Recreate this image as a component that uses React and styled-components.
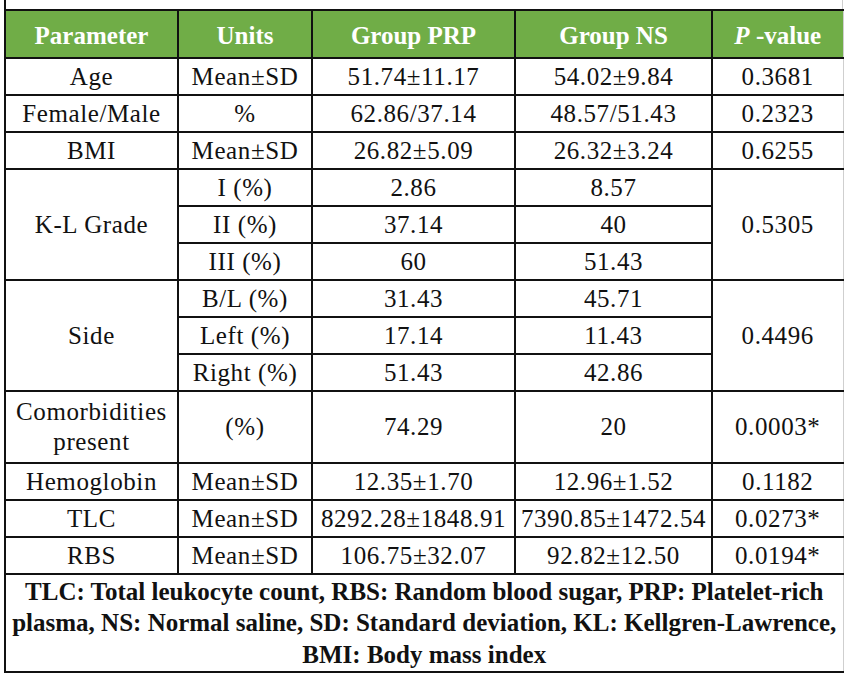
import React from 'react';
import styled, { createGlobalStyle } from 'styled-components';

const GlobalStyle = createGlobalStyle`
  body {
    margin: 0;
    background: #fff;
  }
`;

const rows = [
  ['Age', 'Mean±SD', '51.74±11.17', '54.02±9.84', '0.3681'],
  ['Female/Male', '%', '62.86/37.14', '48.57/51.43', '0.2323'],
  ['BMI', 'Mean±SD', '26.82±5.09', '26.32±3.24', '0.6255'],
];

const groups = [
  {
    name: 'K-L Grade',
    p: '0.5305',
    items: [
      ['I (%)', '2.86', '8.57'],
      ['II (%)', '37.14', '40'],
      ['III (%)', '60', '51.43'],
    ],
  },
  {
    name: 'Side',
    p: '0.4496',
    items: [
      ['B/L (%)', '31.43', '45.71'],
      ['Left (%)', '17.14', '11.43'],
      ['Right (%)', '51.43', '42.86'],
    ],
  },
];

const tail = [
  ['Comorbidities present', '(%)', '74.29', '20', '0.0003*'],
  ['Hemoglobin', 'Mean±SD', '12.35±1.70', '12.96±1.52', '0.1182'],
  ['TLC', 'Mean±SD', '8292.28±1848.91', '7390.85±1472.54', '0.0273*'],
  ['RBS', 'Mean±SD', '106.75±32.07', '92.82±12.50', '0.0194*'],
];

const widths = [173, 134, 203, 197, 131];

const Row = ({ cells }) => (
  <tr>
    {cells.map((c, i) => (
      <Td key={i} $last={i === cells.length - 1} $tall={i === 0 && c.length > 14}>
        {c}
      </Td>
    ))}
  </tr>
);

const App = () => {
  return (
    <Page>
      <GlobalStyle />
      <TopGap />
      <Table>
        <colgroup>
          {widths.map((w, i) => (
            <col key={i} style={{ width: w }} />
          ))}
        </colgroup>
        <thead>
          <tr>
            <Th>Parameter</Th>
            <Th>Units</Th>
            <Th>Group PRP</Th>
            <Th>Group NS</Th>
            <Th $last>
              <i>P</i> -value
            </Th>
          </tr>
        </thead>
        <tbody>
          {rows.map((r, i) => (
            <Row key={i} cells={r} />
          ))}
          {groups.map((g) =>
            g.items.map((it, j) => (
              <tr key={g.name + j}>
                {j === 0 && <Td rowSpan={3}>{g.name}</Td>}
                <Td>{it[0]}</Td>
                <Td>{it[1]}</Td>
                <Td>{it[2]}</Td>
                {j === 0 && (
                  <Td rowSpan={3} $last>
                    {g.p}
                  </Td>
                )}
              </tr>
            ))
          )}
          {tail.map((r, i) => (
            <Row key={i} cells={r} />
          ))}
          <tr>
            <Note colSpan={5}>
              <NoteLine>TLC: Total leukocyte count, RBS: Random blood sugar, PRP: Platelet-rich</NoteLine>
              <NoteLine>plasma, NS: Normal saline, SD: Standard deviation, KL: Kellgren-Lawrence,</NoteLine>
              <NoteLine>BMI: Body mass index</NoteLine>
            </Note>
          </tr>
        </tbody>
      </Table>
    </Page>
  );
};

export default App;

const Page = styled.div`
  width: 850px;
  height: 685px;
  padding-left: 4px;
  box-sizing: border-box;
  font-family: 'Liberation Serif', 'Times New Roman', serif;
  color: #111;
`;

const TopGap = styled.div`
  width: 839px;
  height: 9px;
  box-sizing: border-box;
  border-left: 2px solid #111;
  border-right: 1px solid #cfcfcf;
`;

const Table = styled.table`
  width: 839px;
  table-layout: fixed;
  border-collapse: collapse;
  border-left: 2px solid #111;
  border-right: 1px solid #cfcfcf;
  border-top: 2px solid #111;
  border-bottom: 2px solid #111;
`;

const Th = styled.th`
  height: 43px;
  padding: 3px 4px 0;
  background: #70ad47;
  color: #fff;
  font-size: 25px;
  font-weight: bold;
  text-align: center;
  vertical-align: middle;
  border: 2px solid #111;
  border-right: ${({ $last }) => ($last ? 'none' : '2px solid #111')};
`;

const Td = styled.td`
  height: ${({ $tall }) => ($tall ? '70px' : '35px')};
  padding: 0 4px;
  font-size: 25px;
  letter-spacing: 0.6px;
  line-height: 30px;
  text-align: center;
  vertical-align: middle;
  border: 2px solid #111;
  border-right: ${({ $last }) => ($last ? 'none' : '2px solid #111')};
`;

const Note = styled.td`
  height: 96px;
  padding: 0;
  text-align: center;
  vertical-align: middle;
  font-size: 25px;
  font-weight: bold;
  line-height: 31.5px;
  border-top: 2px solid #111;
`;

const NoteLine = styled.div`
  white-space: nowrap;
`;
